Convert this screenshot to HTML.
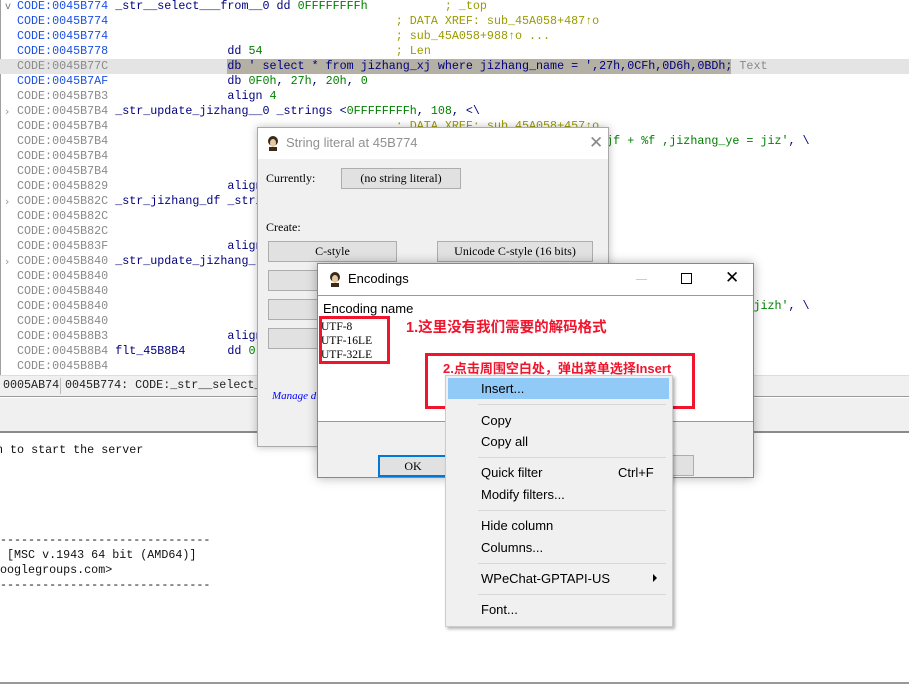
<!DOCTYPE html>
<html><head><meta charset="utf-8">
<style>
*{margin:0;padding:0;box-sizing:border-box}
body{width:909px;height:687px;overflow:hidden;background:#fff;position:relative;font-family:"Liberation Mono",monospace;}
.a{position:absolute;white-space:pre}
.m{font-family:"Liberation Mono",monospace;font-size:11.7px;line-height:15px}
.ad{color:#1a50e6}.ag{color:#8a8a8a}.lb{color:#000080}.nm{color:#008000}.cm{color:#9a9a00}
.s{font-family:"Liberation Sans",sans-serif}
.btn{position:absolute;background:#e1e1e1;border:1px solid #adadad;font-family:"Liberation Serif",serif;font-size:12px;text-align:center;color:#000}
.mi{position:absolute;left:35px;font-family:"Liberation Sans",sans-serif;font-size:13px;color:#000}
.sep{position:absolute;left:32px;right:6px;height:1px;background:#d7d7d7}
.red{color:#f0142d;font-family:"Liberation Sans","Noto Sans CJK SC",sans-serif;font-weight:bold}
</style></head><body>
<div class="a" style="left:0;top:0;width:1px;height:376px;background:#a0a0a0"></div>
<div class="a" style="left:0;top:59px;width:909px;height:15px;background:#e4e4e4"></div>
<div class="a" style="left:227px;top:59px;width:504px;height:15px;background:#b4b0a4"></div>
<div class="a m" style="left:17px;top:-1px"><span class="ad">CODE:0045B774</span> <span class="lb">_str__select___from__0 dd </span><span class="nm">0FFFFFFFFh</span>           <span class="cm">; _top</span>
<span class="ad">CODE:0045B774</span>                                         <span class="cm">; DATA XREF: sub_45A058+487↑o</span>
<span class="ad">CODE:0045B774</span>                                         <span class="cm">; sub_45A058+988↑o ...</span>
<span class="ad">CODE:0045B778</span>                 <span class="lb">dd </span><span class="nm">54</span>                   <span class="cm">; Len</span>
<span class="ag">CODE:0045B77C</span>                 <span class="lb">db ' select * from jizhang_xj where jizhang_name = ',27h,0CFh,0D6h,0BDh;</span><span class="ag"> Text</span>
<span class="ad">CODE:0045B7AF</span>                 <span class="lb">db </span><span class="nm">0F0h</span><span class="lb">, </span><span class="nm">27h</span><span class="lb">, </span><span class="nm">20h</span><span class="lb">, </span><span class="nm">0</span>
<span class="ag">CODE:0045B7B3</span>                 <span class="lb">align </span><span class="nm">4</span>
<span class="ag">CODE:0045B7B4</span> <span class="lb">_str_update_jizhang__0 _strings &lt;</span><span class="nm">0FFFFFFFFh</span><span class="lb">, </span><span class="nm">108</span><span class="lb">, &lt;\</span>
<span class="ag">CODE:0045B7B4</span>                                         <span class="cm">; DATA XREF: sub_45A058+457↑o</span>
<span class="ag">CODE:0045B7B4</span>                                                                       <span class="nm">jf + %f ,jizhang_ye = jiz'</span><span class="lb">, \</span>
<span class="ag">CODE:0045B7B4</span>
<span class="ag">CODE:0045B7B4</span>
<span class="ag">CODE:0045B829</span>                 <span class="lb">align 4</span>
<span class="ag">CODE:0045B82C</span> <span class="lb">_str_jizhang_df _strings</span>
<span class="ag">CODE:0045B82C</span>
<span class="ag">CODE:0045B82C</span>
<span class="ag">CODE:0045B83F</span>                 <span class="lb">align 4</span>
<span class="ag">CODE:0045B840</span> <span class="lb">_str_update_jizhang_</span>
<span class="ag">CODE:0045B840</span>
<span class="ag">CODE:0045B840</span>
<span class="ag">CODE:0045B840</span>                                                                                            <span class="nm">jizh'</span><span class="lb">, \</span>
<span class="ag">CODE:0045B840</span>
<span class="ag">CODE:0045B8B3</span>                 <span class="lb">align 4</span>
<span class="ag">CODE:0045B8B4</span> <span class="lb">flt_45B8B4      dd </span><span class="nm">0</span>
<span class="ag">CODE:0045B8B4</span></div>
<div class="a" style="left:5px;top:-1px;font-size:10px;color:#777;line-height:15px;font-family:'DejaVu Sans'">v</div>
<div class="a" style="left:5px;top:104px;font-size:11px;color:#999;line-height:15px;font-family:'DejaVu Sans'">›</div>
<div class="a" style="left:5px;top:194px;font-size:11px;color:#999;line-height:15px;font-family:'DejaVu Sans'">›</div>
<div class="a" style="left:5px;top:254px;font-size:11px;color:#999;line-height:15px;font-family:'DejaVu Sans'">›</div>
<div class="a" style="left:0;top:375px;width:909px;height:22px;background:#f0f0f0;border-top:1px solid #ddd;border-bottom:1px solid #999"></div>
<div class="a m" style="left:3px;top:378px;color:#222">0005AB74</div>
<div class="a" style="left:60px;top:378px;width:1px;height:16px;background:#bbb"></div>
<div class="a m" style="left:65px;top:378px;color:#222">0045B774: CODE:_str__select_</div>
<div class="a" style="left:0;top:398px;width:909px;height:33px;background:#f0f0f0"></div>
<div class="a" style="left:0;top:431px;width:909px;height:2px;background:#8a8a8a"></div>
<div class="a m" style="left:-4px;top:443px;color:#111">n to start the server</div>
<div class="a m" style="left:0;top:533px;color:#111">------------------------------
 [MSC v.1943 64 bit (AMD64)]
ooglegroups.com&gt;
------------------------------</div>
<div class="a" style="left:0;top:682px;width:909px;height:2px;background:#999"></div>

<div class="a" style="left:257px;top:127px;width:352px;height:320px;background:#f0f0f0;border:1px solid #aaa;box-shadow:0 0 8px rgba(0,0,0,.25)">
 <div class="a" style="left:0;top:0;width:350px;height:31px;background:#fff"></div>
 <svg class="a" style="left:7px;top:7px" width="16" height="16"><circle cx="8" cy="6" r="5" fill="#3a2a1a"/><ellipse cx="8" cy="8" rx="3" ry="4" fill="#e8c8a0"/><rect x="4" y="12" width="8" height="4" fill="#3a2a1a"/></svg>
 <div class="a s" style="left:28px;top:7px;font-size:13px;color:#909090">String literal at 45B774</div>
 <div class="a s" style="left:331px;top:5px;font-size:17px;color:#888">✕</div>
 <div class="a" style="left:8px;top:43px;font-family:'Liberation Serif',serif;font-size:12px">Currently:</div>
 <div class="btn" style="left:83px;top:40px;width:120px;height:21px;line-height:19px">(no string literal)</div>
 <div class="a" style="left:8px;top:92px;font-family:'Liberation Serif',serif;font-size:12px">Create:</div>
 <div class="btn" style="left:10px;top:113px;width:129px;height:21px;line-height:19px">C-style</div>
 <div class="btn" style="left:179px;top:113px;width:156px;height:21px;line-height:19px">Unicode C-style (16 bits)</div>
 <div class="btn" style="left:10px;top:142px;width:129px;height:21px;line-height:19px">Pascal</div>
 <div class="btn" style="left:10px;top:171px;width:129px;height:21px;line-height:19px">Wide</div>
 <div class="btn" style="left:10px;top:200px;width:129px;height:21px;line-height:19px">D</div>
 <div class="a" style="left:14px;top:262px;font-family:'Liberation Serif',serif;font-style:italic;font-size:11px;color:#0000ff">Manage d</div>
</div>

<div class="a" style="left:317px;top:263px;width:437px;height:215px;background:#f0f0f0;border:1px solid #888;box-shadow:0 0 10px rgba(0,0,0,.3)">
 <div class="a" style="left:0;top:0;width:435px;height:31px;background:#fff"></div>
 <svg class="a" style="left:9px;top:7px" width="16" height="16"><circle cx="8" cy="6" r="5" fill="#3a2a1a"/><ellipse cx="8" cy="8" rx="3" ry="4" fill="#e8c8a0"/><rect x="4" y="12" width="8" height="4" fill="#3a2a1a"/></svg>
 <div class="a s" style="left:30px;top:7px;font-size:13px;color:#000">Encodings</div>
 <div class="a" style="left:318px;top:15px;width:11px;height:1px;background:#ccc"></div>
 <div class="a" style="left:363px;top:9px;width:11px;height:11px;border:1px solid #000"></div>
 <div class="a s" style="left:407px;top:4px;font-size:17px;color:#000">✕</div>
 <div class="a" style="left:0;top:31px;width:435px;height:127px;background:#fff;border-top:1px solid #999;border-bottom:1px solid #999"></div>
 <div class="a s" style="left:5px;top:37px;font-size:13px">Encoding name</div>
 <div class="a" style="left:3px;top:56px;font-family:'Liberation Serif',serif;font-size:11.5px;line-height:14px">UTF-8
UTF-16LE
UTF-32LE</div>
 <div class="a" style="left:1px;top:52px;width:71px;height:48px;border:3px solid #f0142d"></div>
 <div class="a red" style="left:88px;top:52px;font-size:14.5px">1.这里没有我们需要的解码格式</div>
 <div class="a" style="left:60px;top:191px;width:70px;height:22px;background:#e1e1e1;border:2px solid #0078d7;font-family:'Liberation Serif',serif;font-size:12px;text-align:center;line-height:18px">OK</div>
 <div class="a" style="left:292px;top:191px;width:84px;height:21px;background:#e1e1e1;border:1px solid #adadad"></div>
</div>

<div class="a" style="left:425px;top:353px;width:270px;height:56px;border:3px solid #f0142d"></div>
<div class="a red" style="left:443px;top:358px;font-size:13px">2.点击周围空白处，弹出菜单选择Insert</div>

<div class="a" style="left:445px;top:375px;width:228px;height:252px;background:#f0f0f0;border:1px solid #ccc;box-shadow:2px 2px 3px rgba(0,0,0,.3)">
 <div class="a" style="left:2px;top:2px;width:221px;height:21px;background:#91c9f7"></div>
 <div class="mi" style="top:5px">Insert...</div>
 <div class="sep" style="top:28px"></div>
 <div class="mi" style="top:37px">Copy</div>
 <div class="mi" style="top:58px">Copy all</div>
 <div class="sep" style="top:81px"></div>
 <div class="mi" style="top:89px">Quick filter</div>
 <div class="mi" style="top:89px;left:172px">Ctrl+F</div>
 <div class="mi" style="top:111px">Modify filters...</div>
 <div class="sep" style="top:134px"></div>
 <div class="mi" style="top:142px">Hide column</div>
 <div class="mi" style="top:164px">Columns...</div>
 <div class="sep" style="top:187px"></div>
 <div class="mi" style="top:195px">WPeChat-GPTAPI-US</div>
 <div class="a" style="left:207px;top:198px;width:0;height:0;border-left:4px solid #000;border-top:4px solid transparent;border-bottom:4px solid transparent"></div>
 <div class="sep" style="top:218px"></div>
 <div class="mi" style="top:226px">Font...</div>
</div>
</body></html>
